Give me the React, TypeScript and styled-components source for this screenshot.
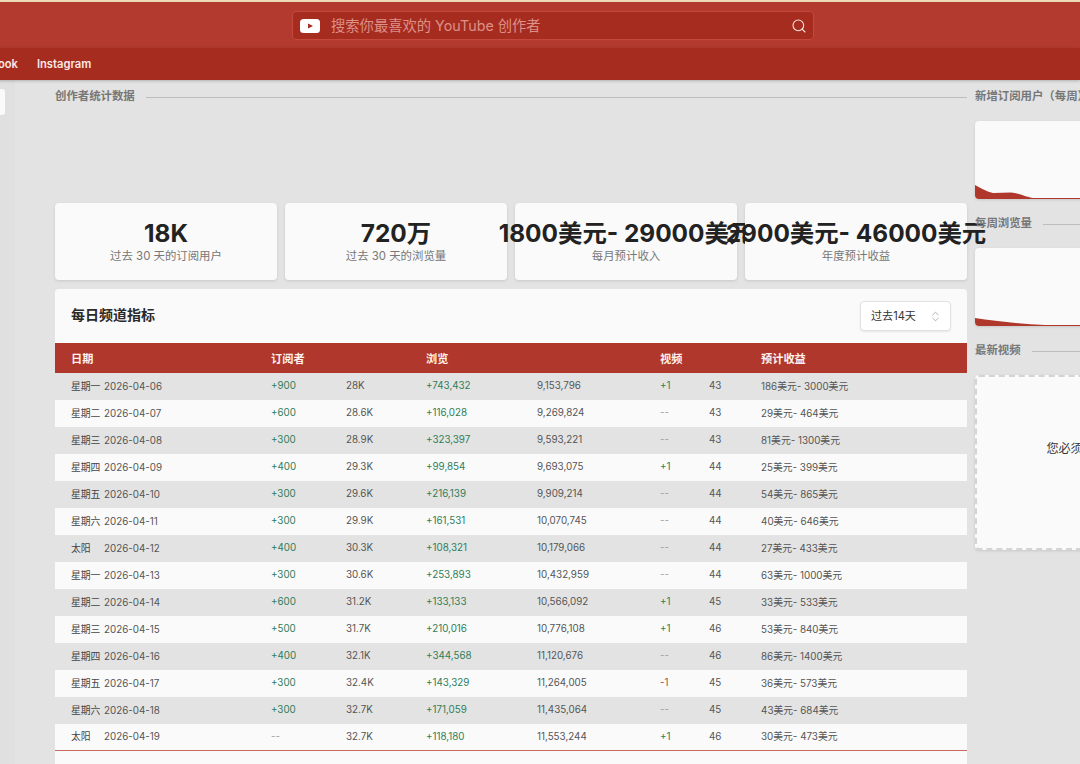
import React from "react";
import styled, { createGlobalStyle } from "styled-components";
import { ChevronsUpDown, Search } from "lucide-react";

const Global = createGlobalStyle`
  html, body { margin: 0; padding: 0; height: 100%; overflow: hidden; background: #e3e3e3; }
  body { font-family: Inter, "Noto Sans CJK SC", sans-serif; color: #222; }
  * { box-sizing: border-box; }
`;

const Header = styled.header`
  border-top: 2px solid #ecd9b8;
  height: 48px;
  background: #b33a2e;
  display: flex;
  justify-content: center;
  padding: 9px 0 0 26px;
`;
const SearchBox = styled.div`
  width: 522px;
  height: 29px;
  background: #a72c20;
  border: 1px solid #c4493c;
  border-radius: 4px;
  display: flex;
  align-items: center;
  padding: 0 6px 0 7px;
  color: #fbe6e2;
`;
const Logo = styled.svg`
  width: 20px;
  height: 14px;
  flex: none;
`;
const Placeholder = styled.span`
  flex: 1;
  margin-left: 11px;
  padding-bottom: 3px;
  font-size: 14.3px;
  color: #dd9087;
  white-space: nowrap;
`;
const Nav = styled.nav`
  height: 32px;
  background: #a72c20;
  box-shadow: 0 1px 3px rgba(0, 0, 0, 0.22);
  display: flex;
  align-items: center;
  gap: 19px;
  margin-left: -35px;
  position: relative;
`;
const NavItem = styled.a`
  font-size: 11.2px;
  font-weight: 600;
  color: #fbe9e5;
  white-space: nowrap;
`;
const Main = styled.main`
  display: flex;
  align-items: flex-start;
`;
const Sidebar = styled.aside`
  width: 15px;
  flex: none;
  height: 690px;
  padding-top: 9px;
  background: #e0e0e0;
`;
const SideCard = styled.div`
  width: 5px;
  height: 26px;
  background: #fafafa;
  border-radius: 0 3px 3px 0;
`;
const Content = styled.section`
  width: 912px;
  flex: none;
  margin-left: 40px;
  padding-top: 9px;
`;
const Rail = styled.section`
  width: 300px;
  flex: none;
  margin-left: 8px;
  padding-top: 9px;
`;
const SectionTitle = styled.div`
  display: flex;
  align-items: flex-start;
  gap: 11px;
  height: 16px;
  font-size: 11.4px;
  line-height: 15px;
  font-weight: 700;
  color: #777;
  white-space: nowrap;
  &::after {
    content: "";
    flex: 1;
    height: 1px;
    margin-top: 7.5px;
    background: #bdbdbd;
  }
`;
const Stats = styled.div`
  display: grid;
  grid-template-columns: repeat(4, minmax(0, 1fr));
  gap: 8px;
  margin-top: 98px;
`;
const StatCard = styled.div`
  height: 77px;
  min-width: 0;
  background: #fafafa;
  border-radius: 4px;
  box-shadow: 0 1px 3px rgba(0, 0, 0, 0.12);
  display: flex;
  flex-direction: column;
  align-items: center;
  padding-top: 15px;
`;
const StatValue = styled.div`
  font-size: 24.4px;
  line-height: 30px;
  height: 30px;
  font-weight: 700;
  color: #222;
  white-space: nowrap;
`;
const StatLabel = styled.div`
  font-size: 11.4px;
  line-height: 16px;
  color: #777;
  white-space: nowrap;
`;
const Panel = styled.div`
  margin-top: 9px;
  background: #fafafa;
  border-radius: 4px 4px 0 0;
  padding-bottom: 40px;
`;
const PanelHead = styled.div`
  height: 54px;
  display: flex;
  align-items: center;
  justify-content: space-between;
  padding: 0 16px;
`;
const PanelTitle = styled.h2`
  margin: 0;
  padding-bottom: 4px;
  font-size: 14px;
  font-weight: 700;
  color: #2a2a2a;
`;
const Select = styled.div`
  width: 91px;
  height: 30px;
  border: 1px solid #e2e2e2;
  border-radius: 4px;
  background: #fff;
  box-shadow: 0 1px 2px rgba(0, 0, 0, 0.08);
  display: flex;
  align-items: center;
  justify-content: space-between;
  padding: 0 8px 2px 10px;
  font-size: 11.1px;
  color: #333;
  svg { color: #999; margin-top: 2px; }
`;
const Table = styled.table`
  width: 100%;
  table-layout: fixed;
  border-collapse: collapse;
`;
const Col = styled.col<{ $w: number }>`
  width: ${(p) => p.$w}px;
`;
const Th = styled.th`
  height: 30px;
  padding: 0 0 0 16px;
  background: #b0372b;
  color: #fdf1ee;
  font-size: 11.2px;
  font-weight: 700;
  text-align: left;
`;
const Td = styled.td<{ $tone?: "up" | "down" | "none" }>`
  padding: 0 0 2px 16px;
  font-size: 9.8px;
  white-space: nowrap;
  color: ${(p) =>
    p.$tone === "up" ? "#2f7d5a" : p.$tone === "down" ? "#b8453b" : p.$tone === "none" ? "#a0a0a0" : "#555"};
`;
const Tr = styled.tr`
  height: 27px;
  background: #fafafa;
  &:nth-child(odd) { background: #e3e3e3; }
  &:last-child { height: 26px; }
  &:last-child ${Td} { border-bottom: 1px solid #c9695f; padding-bottom: 1px; }
`;
const Day = styled.span`
  display: inline-block;
  width: 33px;
  color: #444;
  font-size: 9.8px;
`;
const ChartCard = styled.div`
  height: 78px;
  margin: 16px 0 17px;
  background: #fafafa;
  border-radius: 4px;
  overflow: hidden;
  box-shadow: 0 1px 3px rgba(0, 0, 0, 0.12);
  display: flex;
  align-items: flex-end;
`;
const Chart = styled.svg`
  display: block;
  width: 300px;
  height: 78px;
`;
const Notice = styled.div`
  height: 175px;
  margin-top: 16px;
  background: #fafafa;
  border: 2px dashed #d4d4d4;
  border-radius: 4px;
  box-shadow: 0 1px 3px rgba(0, 0, 0, 0.12);
  display: flex;
  align-items: center;
  justify-content: center;
  font-size: 12.1px;
  color: #333;
  padding-bottom: 30px;
`;

type Row = [string, string, string, string, string, string, string, string, string];
const rows: Row[] = [
  ["星期一", "2026-04-06", "+900", "28K", "+743,432", "9,153,796", "+1", "43", "186美元- 3000美元"],
  ["星期二", "2026-04-07", "+600", "28.6K", "+116,028", "9,269,824", "--", "43", "29美元- 464美元"],
  ["星期三", "2026-04-08", "+300", "28.9K", "+323,397", "9,593,221", "--", "43", "81美元- 1300美元"],
  ["星期四", "2026-04-09", "+400", "29.3K", "+99,854", "9,693,075", "+1", "44", "25美元- 399美元"],
  ["星期五", "2026-04-10", "+300", "29.6K", "+216,139", "9,909,214", "--", "44", "54美元- 865美元"],
  ["星期六", "2026-04-11", "+300", "29.9K", "+161,531", "10,070,745", "--", "44", "40美元- 646美元"],
  ["太阳", "2026-04-12", "+400", "30.3K", "+108,321", "10,179,066", "--", "44", "27美元- 433美元"],
  ["星期一", "2026-04-13", "+300", "30.6K", "+253,893", "10,432,959", "--", "44", "63美元- 1000美元"],
  ["星期二", "2026-04-14", "+600", "31.2K", "+133,133", "10,566,092", "+1", "45", "33美元- 533美元"],
  ["星期三", "2026-04-15", "+500", "31.7K", "+210,016", "10,776,108", "+1", "46", "53美元- 840美元"],
  ["星期四", "2026-04-16", "+400", "32.1K", "+344,568", "11,120,676", "--", "46", "86美元- 1400美元"],
  ["星期五", "2026-04-17", "+300", "32.4K", "+143,329", "11,264,005", "-1", "45", "36美元- 573美元"],
  ["星期六", "2026-04-18", "+300", "32.7K", "+171,059", "11,435,064", "--", "45", "43美元- 684美元"],
  ["太阳", "2026-04-19", "--", "32.7K", "+118,180", "11,553,244", "+1", "46", "30美元- 473美元"],
];

const tone = (v: string): "up" | "down" | "none" =>
  v.startsWith("+") ? "up" : v === "--" ? "none" : "down";

const stats = [
  ["18K", "过去 30 天的订阅用户"],
  ["720万", "过去 30 天的浏览量"],
  ["1800美元- 29000美元", "每月预计收入"],
  ["2900美元- 46000美元", "年度预计收益"],
];

const widths = [200, 75, 80, 111, 123, 49, 52, 222];

export default function App() {
  return (
    <>
      <Global />
      <Header>
        <SearchBox>
          <Logo viewBox="0 0 20 14">
            <rect width="20" height="14" rx="3.5" fill="#fff" />
            <path d="M8 4.500 13 7 8 9.500Z" fill="#a72c20" />
          </Logo>
          <Placeholder>搜索你最喜欢的 YouTube 创作者</Placeholder>
          <Search size={16} strokeWidth={1.6} />
        </SearchBox>
      </Header>
      <Nav>
        <NavItem>Facebook</NavItem>
        <NavItem>Instagram</NavItem>
      </Nav>
      <Main>
        <Sidebar>
          <SideCard />
        </Sidebar>
        <Content>
          <SectionTitle>创作者统计数据</SectionTitle>
          <Stats>
            {stats.map(([value, label]) => (
              <StatCard key={label}>
                <StatValue>{value}</StatValue>
                <StatLabel>{label}</StatLabel>
              </StatCard>
            ))}
          </Stats>
          <Panel>
            <PanelHead>
              <PanelTitle>每日频道指标</PanelTitle>
              <Select>
                过去14天
                <ChevronsUpDown size={13} strokeWidth={1.4} />
              </Select>
            </PanelHead>
            <Table>
              <colgroup>
                {widths.map((w, i) => (
                  <Col key={i} $w={w} />
                ))}
              </colgroup>
              <thead>
                <tr>
                  <Th>日期</Th>
                  <Th colSpan={2}>订阅者</Th>
                  <Th colSpan={2}>浏览</Th>
                  <Th colSpan={2}>视频</Th>
                  <Th>预计收益</Th>
                </tr>
              </thead>
              <tbody>
                {rows.map((r) => (
                  <Tr key={r[1]}>
                    <Td>
                      <Day>{r[0]}</Day>
                      {r[1]}
                    </Td>
                    <Td $tone={tone(r[2])}>{r[2]}</Td>
                    <Td>{r[3]}</Td>
                    <Td $tone={tone(r[4])}>{r[4]}</Td>
                    <Td>{r[5]}</Td>
                    <Td $tone={tone(r[6])}>{r[6]}</Td>
                    <Td>{r[7]}</Td>
                    <Td>{r[8]}</Td>
                  </Tr>
                ))}
              </tbody>
            </Table>
          </Panel>
        </Content>
        <Rail>
          <SectionTitle>新增订阅用户（每周）</SectionTitle>
          <ChartCard>
            <Chart viewBox="0 0 300 78">
              <path
                d="M0 64 C6 67 12 71 18 72 L36 71.500 C44 72 48 75 58 77 L300 77.500 L300 78 L0 78Z"
                fill="#b0372b"
              />
            </Chart>
          </ChartCard>
          <SectionTitle>每周浏览量</SectionTitle>
          <ChartCard>
            <Chart viewBox="0 0 300 78">
              <path d="M0 70 C20 73 45 76 70 77 L300 77.500 L300 78 L0 78Z" fill="#b0372b" />
            </Chart>
          </ChartCard>
          <SectionTitle>最新视频</SectionTitle>
          <Notice>您必须登录才能查看最新视频</Notice>
        </Rail>
      </Main>
    </>
  );
}
